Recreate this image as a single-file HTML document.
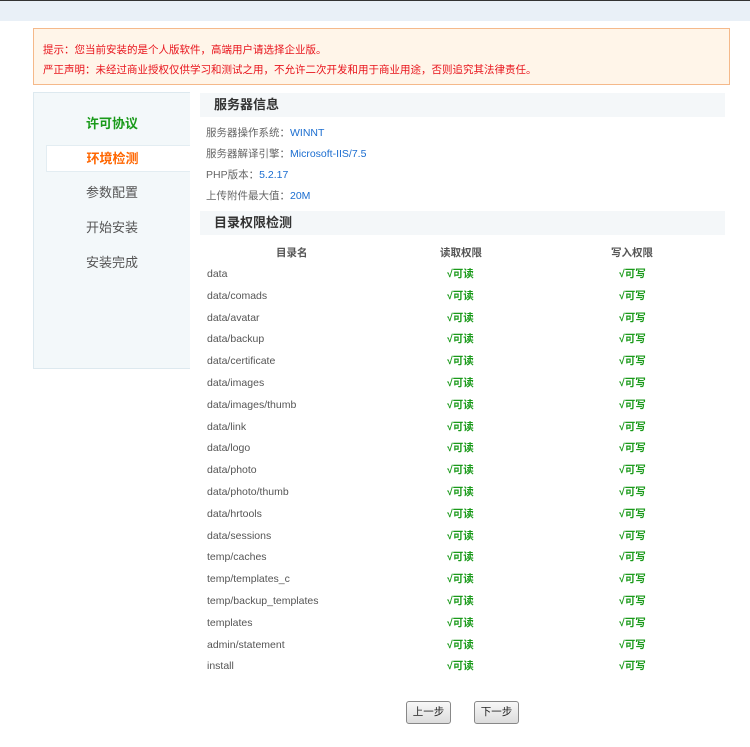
<!DOCTYPE html>
<html><head><meta charset="utf-8"><style>
body{margin:0;width:750px;height:747px;background:#fff;font-family:"Liberation Sans","Noto Sans CJK SC",sans-serif;font-size:11px;color:#555;position:relative;overflow:hidden}
.top{position:absolute;left:0;top:0;width:750px;height:21px;background:#e9f0f7;border-top:1px solid #333;box-sizing:border-box}
.notice{position:absolute;left:33px;top:28px;width:697px;height:57px;box-sizing:border-box;background:#fff5e9;border:1px solid #f5b98a;color:#e8141c;font-size:10.5px;padding:11px 0 0 9px;line-height:20px}
.side{position:absolute;left:33px;top:92px;width:157px;height:277px;box-sizing:border-box;background:#f3f8fa;border:1px solid #dde9ef;border-right:none}
.side div{position:absolute;left:0;width:156px;text-align:center;font-size:13px;color:#555;line-height:16px}
.h{position:absolute;left:200px;width:525px;height:24px;background:#f4f7f9;font-size:13px;font-weight:bold;color:#333;line-height:24px;padding-left:14px;box-sizing:border-box}
.info{position:absolute;left:206px;font-size:10.5px;color:#666}
.info b{font-weight:normal;color:#1a6dd0}
.row{position:absolute;left:207px;width:520px;height:14px;font-size:10.5px;color:#555}
.row span{position:absolute;top:0;line-height:14px;height:14px}
.g{color:#1a9a1a;font-weight:bold}
.btn{position:absolute;top:701px;width:45px;height:23px;box-sizing:border-box;border:1px solid #888;border-radius:3px;background:linear-gradient(#f8f8f8,#dcdcdc);font-size:10.5px;color:#222;text-align:center;line-height:21px}
</style></head><body>
<div class="top"></div>
<div class="notice">提示：您当前安装的是个人版软件，高端用户请选择企业版。<br>严正声明：未经过商业授权仅供学习和测试之用，不允许二次开发和用于商业用途，否则追究其法律责任。</div>
<div class="side">
<div style="top:23px;color:#1a9a1a;font-weight:bold">许可协议</div>
<div style="left:12px;width:144px;top:52px;height:27px;line-height:25px;background:#fff;border:1px solid #e3edf2;border-right:none;color:#ff6600;font-weight:bold;box-sizing:border-box;text-indent:-12px">环境检测</div>
<div style="top:92px">参数配置</div>
<div style="top:127px">开始安装</div>
<div style="top:162px">安装完成</div>
</div>
<div class="h" style="top:93px">服务器信息</div>
<div class="info" style="top:125px">服务器操作系统：<b>WINNT</b></div>
<div class="info" style="top:146px">服务器解译引擎：<b>Microsoft-IIS/7.5</b></div>
<div class="info" style="top:167px">PHP版本：<b>5.2.17</b></div>
<div class="info" style="top:188px">上传附件最大值：<b>20M</b></div>
<div class="h" style="top:211px">目录权限检测</div>
<div class="row" style="top:246px;font-weight:bold;color:#555"><span style="left:69px">目录名</span><span style="left:233px">读取权限</span><span style="left:404px">写入权限</span></div>
<div id="rows"></div>
<script>
var d=["data","data/comads","data/avatar","data/backup","data/certificate","data/images","data/images/thumb","data/link","data/logo","data/photo","data/photo/thumb","data/hrtools","data/sessions","temp/caches","temp/templates_c","temp/backup_templates","templates","admin/statement","install"];
var h="";d.forEach(function(n,i){var t=267+i*21.8;h+='<div class="row" style="top:'+t+'px"><span style="left:0">'+n+'</span><span class="g" style="left:240px">√可读</span><span class="g" style="left:412px">√可写</span></div>'});
document.getElementById("rows").innerHTML=h;
</script>
<div class="btn" style="left:406px">上一步</div>
<div class="btn" style="left:474px">下一步</div>
</body></html>
